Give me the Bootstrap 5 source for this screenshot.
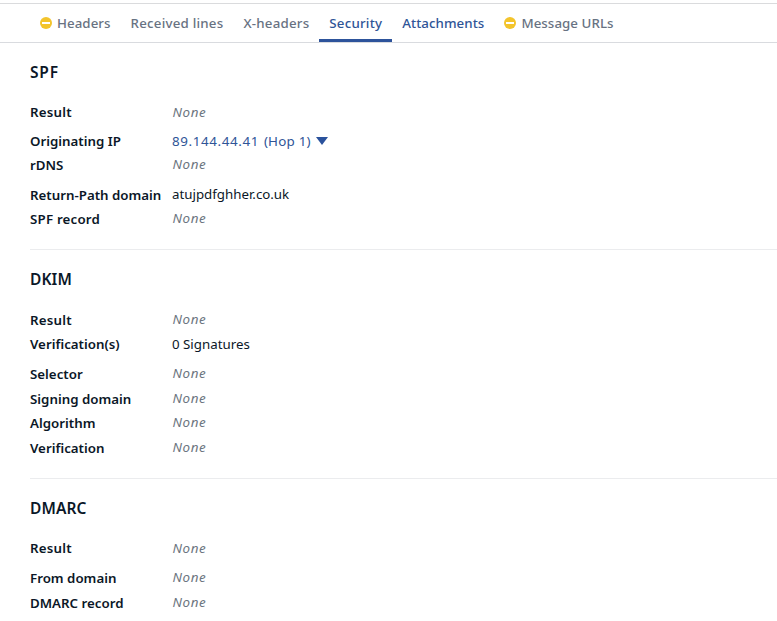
<!DOCTYPE html>
<html lang="en">
<head>
<meta charset="utf-8">
<meta name="viewport" content="width=device-width, initial-scale=1">
<title>Security</title>
<link href="https://cdn.jsdelivr.net/npm/bootstrap@5.3.0/dist/css/bootstrap.min.css" rel="stylesheet">
<style>
body{font-family:"Noto Sans","Liberation Sans",sans-serif;font-size:13.3px;line-height:20px;color:#0b1727;background:#fff;overflow:hidden}
.tabbar{margin-top:3px;height:40px;border-top:1px solid #dadbdd;border-bottom:1px solid #d9dbdf;padding-left:30px}
.tabbar .nav-link{height:38px;padding:9px 10px 0;font-weight:500;color:#687282;white-space:nowrap;letter-spacing:.06px}
.tabbar .nav-link.airy{letter-spacing:.22px}
.tabbar .nav-link.live{color:#2f5597}
.tabbar .nav-link.active{border-bottom:3px solid #2d539b}
.warn{width:12px;height:12px;margin-right:5px;flex:none}
.panel{margin-left:30px;padding-top:17px}
.panel + .panel{border-top:1px solid #ebecee}
.panel h2{font-size:15.5px;line-height:24px;font-weight:600;margin:0 0 18px;letter-spacing:.1px}
.spf h2{letter-spacing:.8px}
.spf{height:206px}.dkim{height:229px}.dkim h2{margin-bottom:19px}
.h24{height:24px}.h25{height:25px}.h29{height:29px}.h30{height:30px}
.term{width:142px;font-weight:600;white-space:nowrap}
.airy{letter-spacing:.2px}
.val{white-space:nowrap}
.raised{margin-top:-1px}
.none{font-family:"Noto Sans",sans-serif;font-style:italic;color:#6c7580;font-size:13.4px;letter-spacing:.55px;padding-left:.6px}
.hop{color:#2f5597;font-size:13.4px;letter-spacing:.5px}
.hop .ip{margin-right:5px;letter-spacing:.6px}
.hop .step{letter-spacing:.2px}
.caret{width:12px;height:8px;margin:6px 0 0 5px}
</style>
</head>
<body>
<nav class="nav tabbar flex-nowrap">
<a class="nav-link d-flex"><svg class="warn mt-1" viewBox="0 0 12 12"><circle cx="6" cy="6" r="6" fill="#f3c42c"/><path d="M2 6h8" stroke="#fff" stroke-width="2"/></svg><span>Headers</span></a>
<a class="nav-link airy"><span>Received lines</span></a>
<a class="nav-link airy"><span>X-headers</span></a>
<a class="nav-link live active airy"><span>Security</span></a>
<a class="nav-link live"><span>Attachments</span></a>
<a class="nav-link d-flex"><svg class="warn mt-1" viewBox="0 0 12 12"><circle cx="6" cy="6" r="6" fill="#f3c42c"/><path d="M2 6h8" stroke="#fff" stroke-width="2"/></svg><span>Message URLs</span></a>
</nav>
<main>
<section class="panel spf">
<h2>SPF</h2>
<div class="d-flex h29"><div class="term airy">Result</div><div class="val none">None</div></div>
<div class="d-flex h24"><div class="term">Originating IP</div><div class="val hop d-flex"><span class="ip">89.144.44.41</span><span class="step">(Hop 1)</span><svg class="caret" viewBox="0 0 12 8"><path d="M0 0h12L6 8z" fill="#2a529c"/></svg></div></div>
<div class="d-flex h30"><div class="term">rDNS</div><div class="val none raised">None</div></div>
<div class="d-flex h24"><div class="term">Return-Path domain</div><div class="val raised">atujpdfghher.co.uk</div></div>
<div class="d-flex h24"><div class="term airy">SPF record</div><div class="val none raised">None</div></div>
</section>
<section class="panel dkim">
<h2>DKIM</h2>
<div class="d-flex h24"><div class="term airy">Result</div><div class="val none raised">None</div></div>
<div class="d-flex h30"><div class="term">Verification(s)</div><div class="val">0 Signatures</div></div>
<div class="d-flex h25"><div class="term">Selector</div><div class="val none raised">None</div></div>
<div class="d-flex h24"><div class="term">Signing domain</div><div class="val none raised">None</div></div>
<div class="d-flex h25"><div class="term">Algorithm</div><div class="val none raised">None</div></div>
<div class="d-flex h24"><div class="term">Verification</div><div class="val none raised">None</div></div>
</section>
<section class="panel dmarc">
<h2>DMARC</h2>
<div class="d-flex h30"><div class="term airy">Result</div><div class="val none">None</div></div>
<div class="d-flex h25"><div class="term">From domain</div><div class="val none raised">None</div></div>
<div class="d-flex"><div class="term">DMARC record</div><div class="val none raised">None</div></div>
</section>
</main>
<script src="https://cdn.jsdelivr.net/npm/bootstrap@5.3.0/dist/js/bootstrap.bundle.min.js"></script>
</body>
</html>
